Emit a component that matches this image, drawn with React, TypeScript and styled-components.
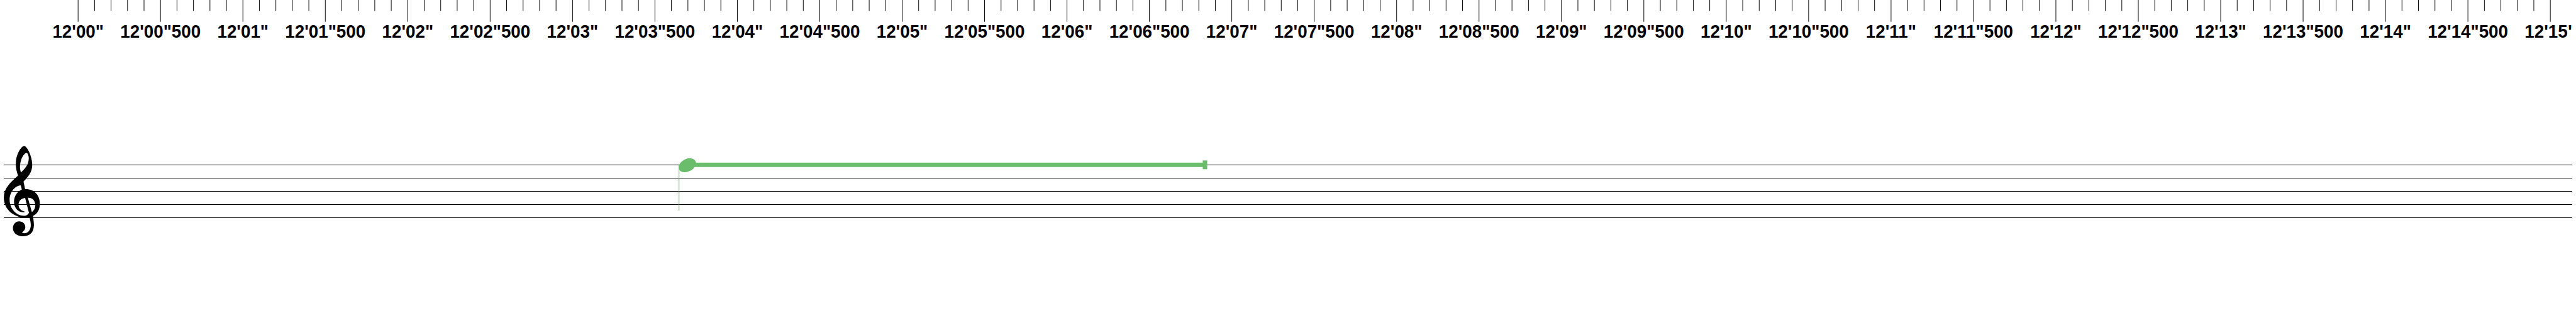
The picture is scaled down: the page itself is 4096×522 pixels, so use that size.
import React from 'react';
import styled, { createGlobalStyle } from 'styled-components';

const SCALE = 4096 / 4717;
const px = (n: number) => `${n * SCALE}px`;

const ORIGIN = 143;
const STEP = 150.9;
const WIDTH = 4710;
const STAFF_HEIGHT = 441;

const GlobalStyle = createGlobalStyle`
  html, body { margin: 0; padding: 0; background: #fff; overflow: hidden; }
`;

const Score = styled.main`
  display: flex;
  flex-direction: column;
  width: ${px(WIDTH)};
  height: 522px;
  overflow: hidden;
  background: #fff;
`;

const Ruler = styled.header`
  display: flex;
  flex-direction: column;
  flex: none;
  height: ${px(160)};
`;

const Drawing = styled.svg<{ $height: number }>`
  display: block;
  flex: none;
  width: ${px(WIDTH)};
  height: ${(p) => px(p.$height)};
`;

const Labels = styled.div`
  display: flex;
  padding-left: ${px(ORIGIN - STEP / 2)};
  transform: scaleY(1.05);
  transform-origin: 0 81%;
`;

const TimeLabel = styled.span`
  display: flex;
  flex: none;
  justify-content: center;
  width: ${px(STEP)};
  font: bold ${px(32)} / ${px(36)} 'Liberation Sans', Arial, sans-serif;
  color: #000;
  white-space: nowrap;
`;

const marks = Array.from({ length: 31 }, (_, i) => {
  const seconds = String(Math.floor(i / 2)).padStart(2, '0');
  return `12'${seconds}"${i % 2 ? '500' : ''}`;
});

const ticks = Array.from({ length: 151 }, (_, i) => ({
  x: ORIGIN + (i * STEP) / 5,
  length: i % 5 === 0 ? 40 : 20,
}));

const staffLines = [0, 1, 2, 3, 4].map((i) => 142.5 + i * 24);

function TrebleClef() {
  return (
    <path
      transform="translate(0 90) scale(0.33333)"
      fillRule="evenodd"
      d="M134 52C148 54 177 108 177 157C177 198 153 224 129 248L138 290
         C188 288 219 323 219 370C219 405 204 426 181 437
         C184 457 187 476 186 493C184 531 161 549 125 549C93 549 71 530 71 505C71 484 85 467 105 467
         C126 467 139 481 139 498C139 513 131 519 120 530C133 536 149 531 158 521C175 501 169 475 163 447
         C145 450 126 449 110 444C50 427 21 385 21 335C21 286 54 255 99 215
         C90 191 86 168 87 145C88 100 117 50 134 52Z
         M147 90C158 98 160 117 156 138C152 159 134 182 115 198C109 180 108 160 113 140C120 111 135 91 147 90Z
         M114 269L120 291C91 305 77 331 77 360C77 395 104 422 135 416C137 415 137 412 133 412
         C115 408 102 395 102 376C102 355 115 341 138 338L159 420C154 432 142 437 127 436
         C84 431 53 393 53 348C53 311 79 271 114 269Z
         M153 337C180 335 193 355 194 378C194 395 186 408 175 416Z"
    />
  );
}

function SustainedNote() {
  return (
    <g fill="#69bd6b">
      <rect x="1242.8" y="143" width="1.2" height="83" />
      <rect x="1260" y="138" width="945" height="8" />
      <rect x="2202.4" y="134" width="8.2" height="16" />
      <ellipse cx="1258.5" cy="142.8" rx="16.84" ry="11.5" transform="rotate(-28 1258.5 142.8)" />
    </g>
  );
}

export default function App() {
  return (
    <>
      <GlobalStyle />
      <Score>
        <Ruler>
          <Drawing $height={40} viewBox={`0 0 ${WIDTH} 40`} preserveAspectRatio="none">
            {ticks.map((t) => (
              <line key={t.x} x1={t.x} x2={t.x} y1={0} y2={t.length} stroke="#000" strokeWidth={1.12} />
            ))}
          </Drawing>
          <Labels>
            {marks.map((m) => (
              <TimeLabel key={m}>{m}</TimeLabel>
            ))}
          </Labels>
        </Ruler>
        <Drawing $height={STAFF_HEIGHT} viewBox={`0 0 ${WIDTH} ${STAFF_HEIGHT}`} preserveAspectRatio="none">
          {staffLines.map((y) => (
            <line
              key={y}
              x1={7}
              x2={WIDTH}
              y1={y}
              y2={y}
              stroke="#000"
              strokeWidth={1 / SCALE}
              shapeRendering="crispEdges"
            />
          ))}
          <TrebleClef />
          <SustainedNote />
        </Drawing>
      </Score>
    </>
  );
}
